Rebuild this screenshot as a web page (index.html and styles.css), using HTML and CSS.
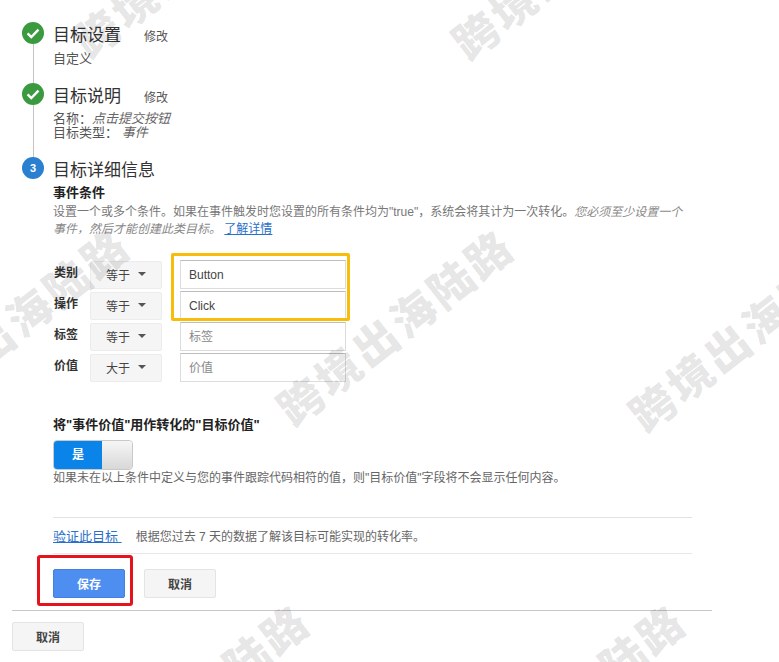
FILE: index.html
```html
<!DOCTYPE html>
<html lang="zh">
<head>
<meta charset="utf-8">
<title>目标详细信息</title>
<link rel="stylesheet" href="styles.css">
</head>
<body>
<div class="page">
  <section class="step step-one">
    <div class="rail">
      <svg class="badge" viewBox="0 0 22 22"><circle cx="11" cy="11" r="11" fill="#3b9a3f"/><path d="M5.6 11.4l3.7 3.7 7.2-7.4" fill="none" stroke="#fff" stroke-width="2.4"/></svg>
      <span class="line"></span>
    </div>
    <div class="step-body">
      <div class="step-head"><h2 class="step-title">目标设置</h2><a class="edit">修改</a></div>
      <p class="summary">自定义</p>
    </div>
  </section>
  <section class="step step-two">
    <div class="rail">
      <svg class="badge" viewBox="0 0 22 22"><circle cx="11" cy="11" r="11" fill="#3b9a3f"/><path d="M5.6 11.4l3.7 3.7 7.2-7.4" fill="none" stroke="#fff" stroke-width="2.4"/></svg>
      <span class="line"></span>
    </div>
    <div class="step-body">
      <div class="step-head"><h2 class="step-title">目标说明</h2><a class="edit">修改</a></div>
      <p class="summary tight">名称：<em>点击提交按钮</em><br>目标类型： <em>事件</em></p>
    </div>
  </section>
  <section class="step step-three">
    <div class="rail">
      <span class="badge badge-num">3</span>
    </div>
    <div class="step-body">
      <div class="step-head"><h2 class="step-title">目标详细信息</h2></div>
      <h3 class="section-title">事件条件</h3>
      <p class="desc">设置一个或多个条件。如果在事件触发时您设置的所有条件均为"true"，系统会将其计为一次转化。<em>您必须至少设置一个事件，然后才能创建此类目标。</em> <a class="link">了解详情</a></p>
      <div class="conditions">
        <div class="cond"><label class="cond-label">类别</label><button class="select">等于<i class="caret"></i></button><div class="field">Button</div></div>
        <div class="cond"><label class="cond-label">操作</label><button class="select">等于<i class="caret"></i></button><div class="field">Click</div></div>
        <div class="cond"><label class="cond-label">标签</label><button class="select">等于<i class="caret"></i></button><div class="field placeholder">标签</div></div>
        <div class="cond"><label class="cond-label">价值</label><button class="select">大于<i class="caret"></i></button><div class="field placeholder">价值</div></div>
      </div>
      <h3 class="section-title value-title">将"事件价值"用作转化的"目标价值"</h3>
      <div class="toggle"><span class="toggle-on">是</span><span class="toggle-off"></span></div>
      <p class="desc helper">如果未在以上条件中定义与您的事件跟踪代码相符的值，则"目标价值"字段将不会显示任何内容。</p>
      <div class="verify"><a class="link verify-link">验证此目标&nbsp;</a><span class="verify-text">根据您过去 7 天的数据了解该目标可能实现的转化率。</span></div>
      <div class="actions"><button class="btn btn-primary">保存</button><button class="btn">取消</button></div>
    </div>
  </section>
  <footer class="footer"><button class="btn">取消</button></footer>

  <div class="mark mark-yellow"></div>
  <div class="mark mark-red"></div>

  <div class="wm wm-a">跨境出海陆路</div>
  <div class="wm wm-b">跨境出海陆路</div>
  <div class="wm wm-c">跨境出海陆路</div>
  <div class="wm wm-d">跨境出海陆路</div>
  <div class="wm wm-e">跨境出海陆路</div>
  <div class="wm wm-f">跨境出海陆路</div>
  <div class="wm wm-g">跨境出海陆路</div>
</div>
</body>
</html>
```
FILE: styles.css
```css
* { box-sizing: border-box; }
html, body { margin: 0; padding: 0; background: #fff; }
body {
  font-family: "Liberation Sans", "Noto Sans CJK SC", sans-serif;
  font-size: 12px;
  color: #444;
  width: 779px;
  height: 662px;
  overflow: hidden;
}
.page { position: relative; width: 779px; height: 662px; overflow: hidden; padding-top: 22px; }
.step { display: flex; padding-left: 22px; }
.step-one { height: 61px; }
.step-two { height: 74px; }
.rail { width: 22px; flex: none; display: flex; flex-direction: column; align-items: center; }
.badge { width: 22px; height: 22px; flex: none; display: block; }
.badge-num {
  border-radius: 50%;
  background: #2a7fd0;
  color: #fff;
  font-size: 11px;
  font-weight: 700;
  line-height: 22px;
  text-align: center;
}
.line { width: 1px; flex: 1; background: #c4c4c4; }
.step-body { margin-left: 9px; width: 639px; flex: none; }
.step-head { display: flex; align-items: center; height: 26px; margin-top: 1px; }
.step-title { margin: 0; font-size: 17px; font-weight: 400; color: #333; width: 91px; line-height: 26px; white-space: nowrap; }
.edit { font-size: 12px; color: #555; line-height: 26px; margin-top: 2px; }
.summary { margin: 2px 0 0; line-height: 16px; color: #555; font-size: 13px; }
.summary.tight { line-height: 14px; margin-top: 2px; }
.summary em { color: #666; }
.section-title { margin: 1px 0 0; font-size: 13px; font-weight: 700; color: #222; line-height: 16px; }
.desc { margin: 3px 0 0; line-height: 17px; color: #777; font-size: 12px; }
.desc em { color: #888; }
.link { color: #2a6fc9; text-decoration: underline; }
.conditions { display: flex; flex-direction: column; gap: 2px; margin-top: 22px; }
.cond { display: flex; align-items: flex-start; height: 29px; }
.cond-label { width: 37px; flex: none; font-weight: 700; color: #333; line-height: 26px; padding-left: 1px; }
.select {
  width: 72px;
  height: 28px;
  margin-top: 1px;
  flex: none;
  display: flex;
  align-items: center;
  justify-content: center;
  gap: 8px;
  border: 1px solid #ececec;
  border-radius: 2px;
  background: #f5f5f5;
  font: inherit;
  color: #444;
  padding: 0 0 2px;
}
.caret { width: 0; height: 0; border: 4px solid transparent; border-top-color: #555; border-bottom: 0; }
.field {
  width: 166px;
  height: 29px;
  margin-left: 18px;
  flex: none;
  border: 1px solid #dcdcdc;
  border-top-color: #bdbdbd;
  padding-left: 8px;
  line-height: 29px;
  background: #fff;
  color: #444;
}
.field.placeholder { color: #888; }
.value-title { margin-top: 35px; }
.toggle { display: flex; width: 80px; height: 30px; margin-top: 7px; border-radius: 4px; overflow: hidden; border: 1px solid #c9c9c9; }
.toggle-on { width: 48px; background: #0a84e8; color: #fff; font-weight: 700; text-align: center; line-height: 28px; }
.toggle-off { flex: 1; background: linear-gradient(#f6f6f6, #d8d8d8); }
.helper { margin-top: 0; line-height: 16px; color: #666; }
.verify {
  margin-top: 31px;
  height: 37px;
  border-top: 1px solid #e2e2e2;
  border-bottom: 1px solid #e8e8e8;
  display: flex;
  align-items: center;
  gap: 14px;
}
.verify-link { font-size: 13px; }
.verify-text { color: #666; font-size: 12px; }
.actions { display: flex; gap: 19px; margin-top: 15px; }
.btn {
  width: 72px;
  height: 29px;
  border: 1px solid #e4e4e4;
  border-radius: 2px;
  background: #f5f5f5;
  color: #444;
  font: inherit;
  font-weight: 700;
  padding: 0;
}
.btn-primary { background: #4d8ef0; border-color: #4380e0; color: #fff; }
.step-three { height: 453px; }
.footer { margin: 0 67px 0 12px; border-top: 1px solid #c8c8c8; padding-top: 11px; }
.mark { position: absolute; }
.mark-yellow { left: 171px; top: 253px; width: 179px; height: 68px; border: 3px solid #f7bd0a; border-radius: 2px; }
.mark-red { left: 37px; top: 555px; width: 96px; height: 51px; border: 3px solid #e5141c; border-radius: 3px; }
.wm {
  position: absolute;
  font-family: "Noto Sans CJK SC", sans-serif;
  font-weight: 900;
  font-size: 44px;
  letter-spacing: 3.5px;
  line-height: 50px;
  white-space: nowrap;
  color: rgba(0, 0, 0, 0.11);
  transform: rotate(-38deg);
  transform-origin: 0 50%;
  pointer-events: none;
}
.wm-a { left: 78px; top: 20px; }
.wm-b { left: 457px; top: 22px; }
.wm-c { left: -102px; top: 387px; }
.wm-d { left: 282px; top: 388px; }
.wm-e { left: 634px; top: 394px; }
.wm-f { left: 78px; top: 763px; }
.wm-g { left: 454px; top: 763px; }
```
